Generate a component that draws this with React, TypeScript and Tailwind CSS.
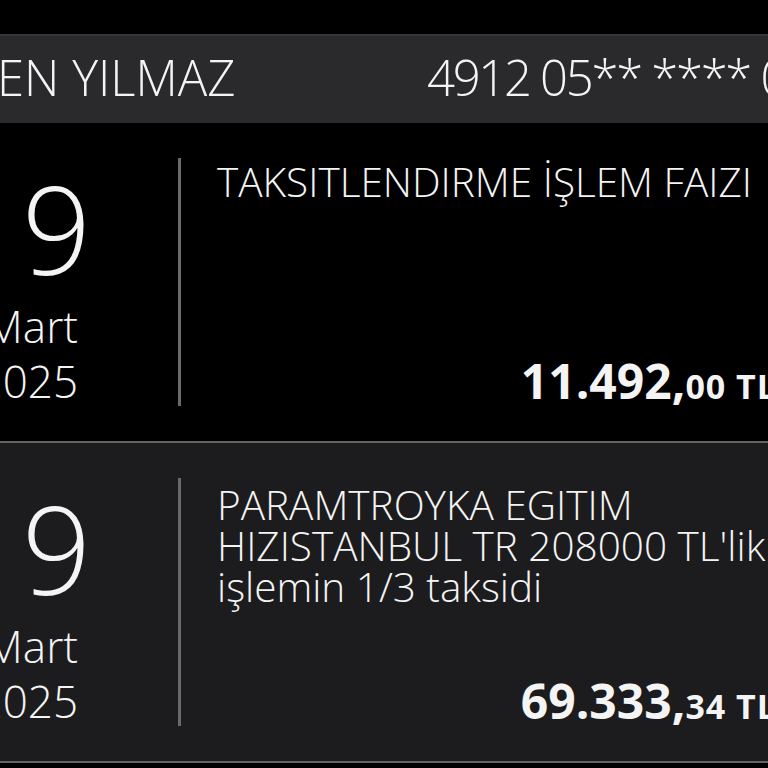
import React from 'react';

type Txn = {
  day: string;
  month: string;
  year: string;
  lines: string[];
  whole: string;
  cents: string;
  dark?: boolean;
  titleTop: string;
};

const txns: Txn[] = [
  {
    day: '9',
    month: 'Mart',
    year: '2025',
    lines: ['TAKSITLENDIRME İŞLEM FAIZI'],
    whole: '11.492,',
    cents: '00 TL',
    titleTop: 'pt-[38px]',
  },
  {
    day: '9',
    month: 'Mart',
    year: '2025',
    lines: ['PARAMTROYKA EGITIM', "HIZISTANBUL TR 208000 TL'lik", 'işlemin 1/3 taksidi'],
    whole: '69.333,',
    cents: '34 TL',
    dark: true,
    titleTop: 'pt-[41px]',
  },
];

function TxnRow({ t }: { t: Txn }) {
  return (
    <div className={`flex h-[320px] border-b-2 border-[#646464] ${t.dark ? 'bg-[#1c1c1e]' : 'bg-black'}`}>
      {/* date */}
      <div className="w-[178px] shrink-0 pt-[45px] flex flex-col">
        <div className="pl-[22px] text-[121px] leading-none font-light">{t.day}</div>
        <div className="mt-[10px] w-[130px] -ml-[52px] text-right text-[44px] leading-[55px] font-light whitespace-nowrap">
          <div>{t.month}</div>
          <div>{t.year}</div>
        </div>
      </div>

      <div className="w-[3px] shrink-0 my-[35px] bg-[#6a6a6a]" />

      {/* detail */}
      <div className={`flex-1 flex flex-col justify-between pl-[36px] pr-[23px] pb-[36px] ${t.titleTop}`}>
        <div className="text-[40.5px] leading-[41px] font-light whitespace-nowrap">
          {t.lines.map((l) => (
            <div key={l}>{l}</div>
          ))}
        </div>
        <div className="text-right text-[48px] leading-none font-bold whitespace-nowrap">
          {t.whole}
          <span className="text-[34px] tracking-[1px]">{t.cents}</span>
        </div>
      </div>
    </div>
  );
}

export default function App() {
  return (
    <div className="w-[768px] h-[768px] overflow-hidden bg-black text-[#f4f4f4] font-['Open_Sans',sans-serif]">
      <div className="w-[800px]">
        <div className="h-[34px]" />
        <div className="h-[89px] bg-[#2a2a2c] border-t-2 border-[#37373a] flex pt-[17px] text-[49px] leading-none font-light whitespace-nowrap">
          <div className="w-[430px] shrink-0 -ml-[3px]">EN YILMAZ</div>
          <div className="tracking-[-2.3px]">4912 05** **** 0000</div>
        </div>
        {txns.map((t, i) => (
          <TxnRow key={i} t={t} />
        ))}
      </div>
    </div>
  );
}
